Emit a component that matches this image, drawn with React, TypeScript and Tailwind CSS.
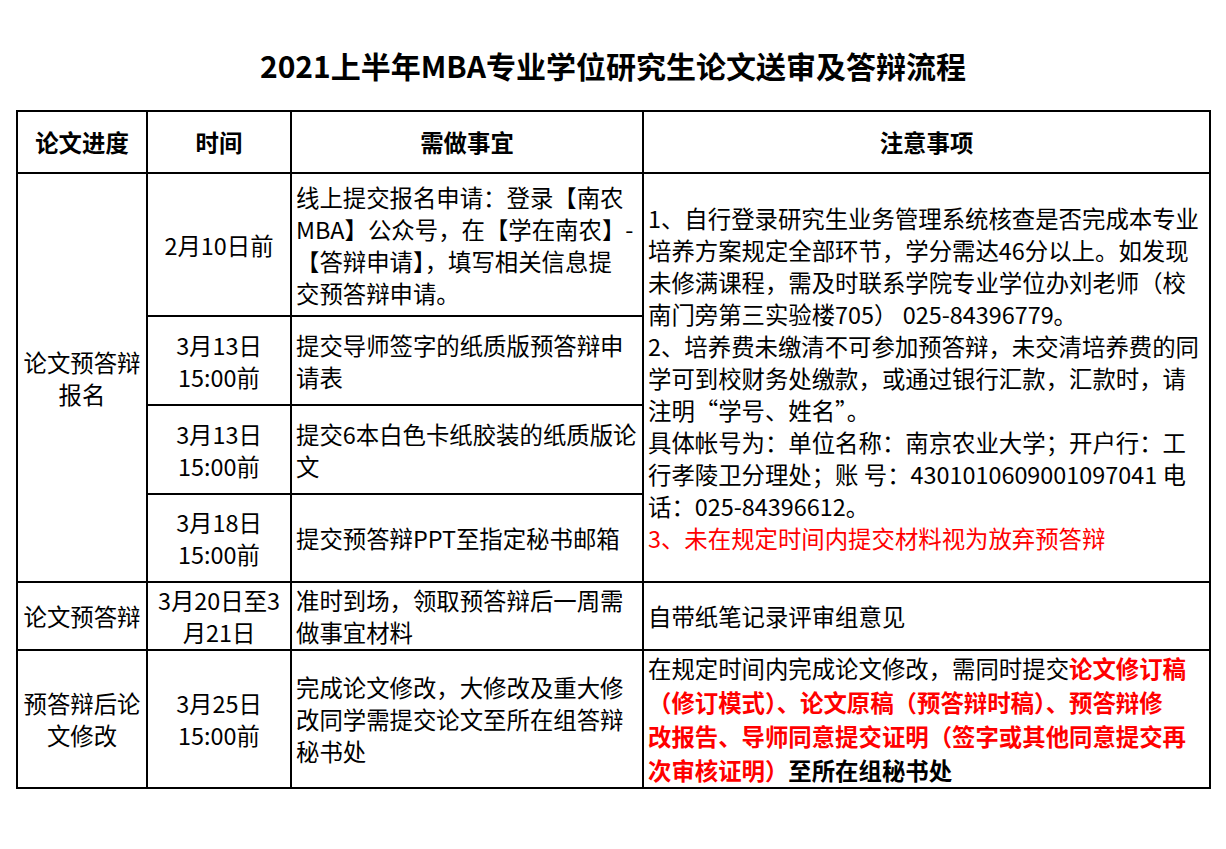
import React from 'react';

const Lines = ({ lines }: { lines: string[] }) => (
    <>
        {lines.map((line, i) => (
            <span key={i} className="block whitespace-nowrap">
                {line}
            </span>
        ))}
    </>
);

const cell = 'border-2 border-black align-middle leading-[32px]';

const notes = [
    '1、自行登录研究生业务管理系统核查是否完成本专业',
    '培养方案规定全部环节，学分需达46分以上。如发现',
    '未修满课程，需及时联系学院专业学位办刘老师（校',
    '南门旁第三实验楼705） 025-84396779。',
    '2、培养费未缴清不可参加预答辩，未交清培养费的同',
    '学可到校财务处缴款，或通过银行汇款，汇款时，请',
    '注明“学号、姓名”。',
    '具体帐号为：单位名称：南京农业大学；开户行：工',
    '行孝陵卫分理处；账 号：4301010609001097041 电',
    '话：025-84396612。',
];

const App = () => {
    return (
        <div
            className="w-[1226px] h-[849px] bg-white text-black"
            style={{ fontFamily: '"Noto Sans CJK SC", "Noto Sans", sans-serif' }}
        >
            <h1 className="pt-[45px] h-[110px] text-center text-[30px] leading-[40px] font-bold">
                2021上半年MBA专业学位研究生论文送审及答辩流程
            </h1>

            <table className="ml-[16px] w-[1193px] table-fixed border-collapse text-[23.4px]">
                <colgroup>
                    <col className="w-[130px]" />
                    <col className="w-[144px]" />
                    <col className="w-[352px]" />
                    <col className="w-[567px]" />
                </colgroup>
                <tbody>
                    {/* header */}
                    <tr className="h-[62px] font-bold">
                        <td className={`${cell} text-center`}>论文进度</td>
                        <td className={`${cell} text-center`}>时间</td>
                        <td className={`${cell} text-center`}>需做事宜</td>
                        <td className={`${cell} text-center`}>注意事项</td>
                    </tr>

                    {/* 预答辩报名 */}
                    <tr className="h-[143px]">
                        <td rowSpan={4} className={`${cell} text-center`}>
                            <Lines lines={['论文预答辩', '报名']} />
                        </td>
                        <td className={`${cell} text-center`}>2月10日前</td>
                        <td className={`${cell} px-1`}>
                            <Lines
                                lines={[
                                    '线上提交报名申请：登录【南农',
                                    'MBA】公众号，在【学在南农】-',
                                    '【答辩申请】，填写相关信息提',
                                    '交预答辩申请。',
                                ]}
                            />
                        </td>
                        <td rowSpan={4} className={`${cell} px-1`}>
                            <Lines lines={notes} />
                            <span className="block whitespace-nowrap text-[#ff0000]">
                                3、未在规定时间内提交材料视为放弃预答辩
                            </span>
                        </td>
                    </tr>
                    <tr className="h-[89px]">
                        <td className={`${cell} text-center`}>
                            <Lines lines={['3月13日', '15:00前']} />
                        </td>
                        <td className={`${cell} px-1`}>
                            <Lines lines={['提交导师签字的纸质版预答辩申', '请表']} />
                        </td>
                    </tr>
                    <tr className="h-[89px]">
                        <td className={`${cell} text-center`}>
                            <Lines lines={['3月13日', '15:00前']} />
                        </td>
                        <td className={`${cell} px-1`}>
                            <Lines lines={['提交6本白色卡纸胶装的纸质版论', '文']} />
                        </td>
                    </tr>
                    <tr className="h-[88px]">
                        <td className={`${cell} text-center`}>
                            <Lines lines={['3月18日', '15:00前']} />
                        </td>
                        <td className={`${cell} px-1`}>提交预答辩PPT至指定秘书邮箱</td>
                    </tr>

                    {/* 预答辩 */}
                    <tr className="h-[68px]">
                        <td className={`${cell} text-center`}>论文预答辩</td>
                        <td className={`${cell} text-center`}>
                            <Lines lines={['3月20日至3', '月21日']} />
                        </td>
                        <td className={`${cell} px-1`}>
                            <Lines lines={['准时到场，领取预答辩后一周需', '做事宜材料']} />
                        </td>
                        <td className={`${cell} px-1`}>自带纸笔记录评审组意见</td>
                    </tr>

                    {/* 修改 */}
                    <tr className="h-[136px]">
                        <td className={`${cell} text-center`}>
                            <Lines lines={['预答辩后论', '文修改']} />
                        </td>
                        <td className={`${cell} text-center`}>
                            <Lines lines={['3月25日', '15:00前']} />
                        </td>
                        <td className={`${cell} px-1`}>
                            <Lines
                                lines={[
                                    '完成论文修改，大修改及重大修',
                                    '改同学需提交论文至所在组答辩',
                                    '秘书处',
                                ]}
                            />
                        </td>
                        <td className={`${cell} px-1 leading-[34px]`}>
                            <span className="block whitespace-nowrap">
                                在规定时间内完成论文修改，需同时提交
                                <b className="text-[#ff0000]">论文修订稿</b>
                            </span>
                            <span className="block whitespace-nowrap font-bold text-[#ff0000]">
                                （修订模式）、论文原稿（预答辩时稿）、预答辩修
                            </span>
                            <span className="block whitespace-nowrap font-bold text-[#ff0000]">
                                改报告、导师同意提交证明（签字或其他同意提交再
                            </span>
                            <span className="block whitespace-nowrap font-bold">
                                <span className="text-[#ff0000]">次审核证明）</span>至所在组秘书处
                            </span>
                        </td>
                    </tr>
                </tbody>
            </table>
        </div>
    );
};

export default App;
